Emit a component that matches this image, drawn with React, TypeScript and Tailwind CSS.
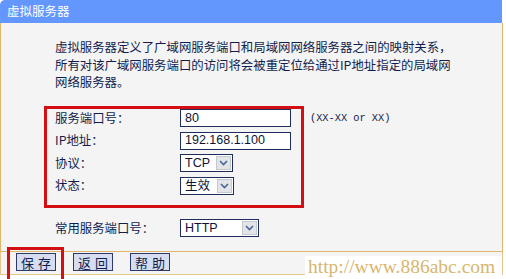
import React from 'react';

const cjk = '"Noto Sans CJK SC", "Noto Sans", sans-serif';
const arial = '"Liberation Sans", Arial, sans-serif';

function Chevron() {
  return (
    <svg width="9" height="6" viewBox="0 0 9 6">
      <polyline points="1,1 4.5,4.5 8,1" fill="none" stroke="#47679a" strokeWidth="1.6" />
    </svg>
  );
}

function FakeSelect({ value, width, cjkText }: { value: string; width: string; cjkText?: boolean }) {
  return (
    <div className={`flex h-[18px] ${width} items-stretch border border-[#1f2d5c] bg-white`}>
      <div
        className="flex flex-1 items-center pl-[4px] text-[12.5px] leading-none text-[#0c1435]"
        style={{ fontFamily: cjkText ? cjk : arial }}
      >
        {value}
      </div>
      <div className="m-[1px] flex w-[15px] items-center justify-center border border-[#c4c8d0] bg-[#e2e4e8]">
        <Chevron />
      </div>
    </div>
  );
}

function TextInput({ value }: { value: string }) {
  return (
    <div
      className="flex h-[18px] w-[111px] items-center border border-[#1f2d5c] bg-white pl-[4px] text-[12.5px] leading-none text-[#0c1435]"
      style={{ fontFamily: arial }}
    >
      {value}
    </div>
  );
}

function Row({ label, children }: { label: string; children: React.ReactNode }) {
  return (
    <div className="flex h-[18px] items-center">
      <div className="w-[125px] whitespace-nowrap text-[12.4px] leading-none text-[#121d4d]">{label}</div>
      {children}
    </div>
  );
}

function Btn({ label }: { label: string }) {
  return (
    <div className="flex h-[18px] w-[40px] items-center justify-center whitespace-nowrap border border-[#2b3a6b] bg-[#d6ddf1] text-[13px] leading-none tracking-[4px] text-[#121d4d]">
      <span className="pl-[4px]">{label}</span>
    </div>
  );
}

export default function App() {
  return (
    <div className="relative h-[279px] w-[506px] overflow-hidden bg-white" style={{ fontFamily: cjk }}>
      <div className="flex h-[23px] w-[502px] items-center rounded-tl-[5px] bg-[#6397fd] pl-[7px] text-[12.5px] text-white">
        虚拟服务器
      </div>

      <div className="h-[229px] w-[503px] border-x border-b border-[#e0b56c] bg-[#f4f4f4]">
        <div className="whitespace-nowrap pl-[54px] pt-[16px] text-[12.4px] leading-[17.5px] text-[#121d4d]">
          虚拟服务器定义了广域网服务端口和局域网网络服务器之间的映射关系，
          <br />
          所有对该广域网服务端口的访问将会被重定位给通过IP地址指定的局域网
          <br />
          网络服务器。
        </div>

        <div className="mt-[14.5px] flex items-start pl-[43px]">
          <div className="flex h-[102px] w-[260px] flex-col gap-[4.5px] border-[3px] border-[#d40f14] pl-[8px]">
            <Row label="服务端口号：">
              <TextInput value="80" />
            </Row>
            <Row label="IP地址：">
              <TextInput value="192.168.1.100" />
            </Row>
            <Row label="协议：">
              <FakeSelect value="TCP" width="w-[53px]" />
            </Row>
            <Row label="状态：">
              <FakeSelect value="生效" width="w-[54px]" cjkText />
            </Row>
          </div>
          <div
            className="ml-[6px] mt-[5px] whitespace-nowrap text-[10.3px] leading-[14px] text-[#121d4d]"
            style={{ fontFamily: '"Liberation Mono", monospace' }}
          >
            (XX-XX or XX)
          </div>
        </div>

        <div className="mt-[11px] pl-[54px]">
          <Row label="常用服务端口号：">
            <FakeSelect value="HTTP" width="w-[79px]" />
          </Row>
        </div>
      </div>

      <div className="flex h-[23px] w-[503px] gap-[17px] border-x border-b border-[#e6c58e] bg-[#f4f4f4] pl-[15px] pt-[1px]">
        <Btn label="保存" />
        <Btn label="返回" />
        <Btn label="帮助" />
      </div>

      {/* annotation box round the save button */}
      <div className="absolute left-[7px] top-[247px] h-[40px] w-[57px] border-[3px] border-[#d40f14]" />

      {/* watermark */}
      <div
        className="absolute left-[305px] top-[256px] h-[23px] w-[197px] bg-white pl-[3px] text-[19.5px] leading-[22px] text-[#d9b56d]"
        style={{ fontFamily: '"Liberation Serif", serif' }}
      >
        http://www.886abc.com
      </div>
    </div>
  );
}
